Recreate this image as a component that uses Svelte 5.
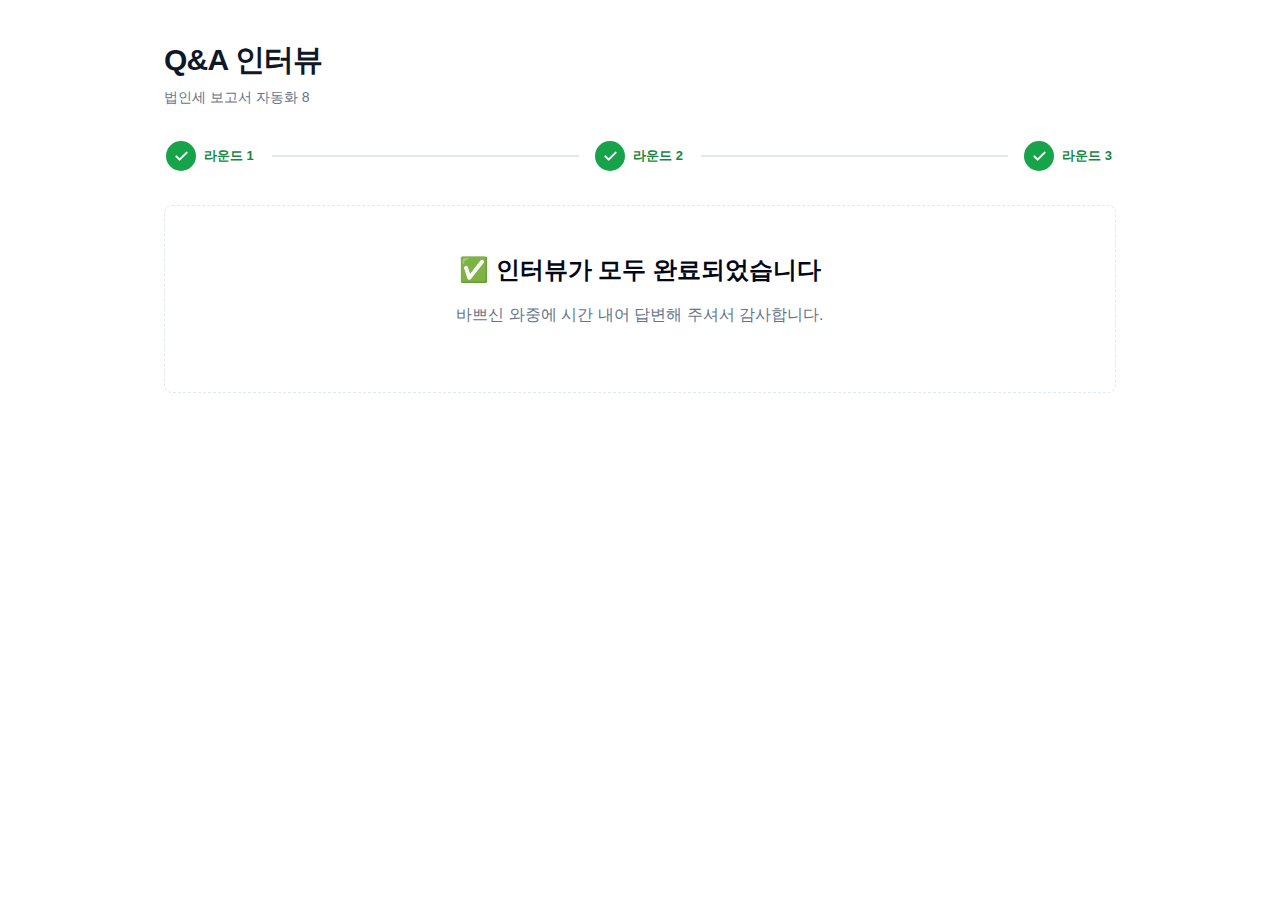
<script lang="ts">
  type Round = {
    label: string;
    done: boolean;
  };

  const rounds: Round[] = [
    { label: "라운드 1", done: true },
    { label: "라운드 2", done: true },
    { label: "라운드 3", done: true },
  ];
</script>

<main class="page">
  <header class="page__header">
    <h1 class="page__title">Q&amp;A 인터뷰</h1>
    <p class="page__subtitle">법인세 보고서 자동화 8</p>
  </header>

  <ol class="stepper">
    {#each rounds as round, i}
      {#if i > 0}
        <li class="stepper__line" aria-hidden="true"></li>
      {/if}
      <li class="stepper__item" class:stepper__item--done={round.done}>
        <span class="stepper__dot">
          {#if round.done}
            <svg
              width="16"
              height="16"
              viewBox="0 0 24 24"
              fill="none"
              stroke="currentColor"
              stroke-width="3"
              stroke-linecap="round"
              stroke-linejoin="round"
              aria-hidden="true"
            >
              <path d="M20.5 7 10 17.5l-5-5" />
            </svg>
          {:else}
            {i + 1}
          {/if}
        </span>
        <span class="stepper__label">{round.label}</span>
      </li>
    {/each}
  </ol>

  <section class="notice">
    <h2 class="notice__title">✅ 인터뷰가 모두 완료되었습니다</h2>
    <p class="notice__text">바쁘신 와중에 시간 내어 답변해 주셔서 감사합니다.</p>
  </section>
</main>

<style>
  :global(body) {
    margin: 0;
    background: #fff;
    color: #020817;
    font-family: "Liberation Sans", sans-serif;
    font-size: 16px;
    line-height: 24px;
  }

  .page {
    box-sizing: border-box;
    max-width: 1000px;
    margin: 0 auto;
    padding: 40px 24px;
  }

  .page__header {
    display: flex;
    flex-direction: column;
    gap: 7px;
    margin-bottom: 32px;
  }

  .page__title {
    margin: 0;
    color: #0f172a;
    font-size: 30px;
    font-weight: 700;
    line-height: 40px;
    letter-spacing: -0.025em;
  }

  .page__subtitle {
    margin: 0;
    color: #64748b;
    font-size: 14px;
    line-height: 20px;
  }

  .stepper {
    display: flex;
    align-items: center;
    gap: 16px;
    margin: 0 0 32px;
    padding: 2px;
    list-style: none;
  }

  .stepper__item {
    display: flex;
    align-items: center;
    gap: 8px;
    padding-right: 2px;
    color: #64748b;
  }

  .stepper__item--done {
    color: #15883e;
  }

  .stepper__dot {
    display: flex;
    align-items: center;
    justify-content: center;
    width: 30px;
    height: 30px;
    border-radius: 50%;
    background: #e2e8f0;
    font-size: 13px;
  }

  .stepper__item--done .stepper__dot {
    background: #16a34a;
    color: #fff;
  }

  .stepper__label {
    font-size: 13px;
    font-weight: 600;
    line-height: 20px;
    white-space: nowrap;
  }

  .stepper__line {
    flex: 1;
    height: 2px;
    background: #e2e8f0;
  }

  .notice {
    padding: 48px 24px 64px;
    border: 1px dashed #e2e8f0;
    border-radius: 8px;
    text-align: center;
  }

  .notice__title {
    margin: 0 0 16px;
    font-size: 24px;
    font-weight: 600;
    line-height: 32px;
  }

  .notice__text {
    margin: 0;
    color: #64748b;
    line-height: 26px;
  }
</style>
